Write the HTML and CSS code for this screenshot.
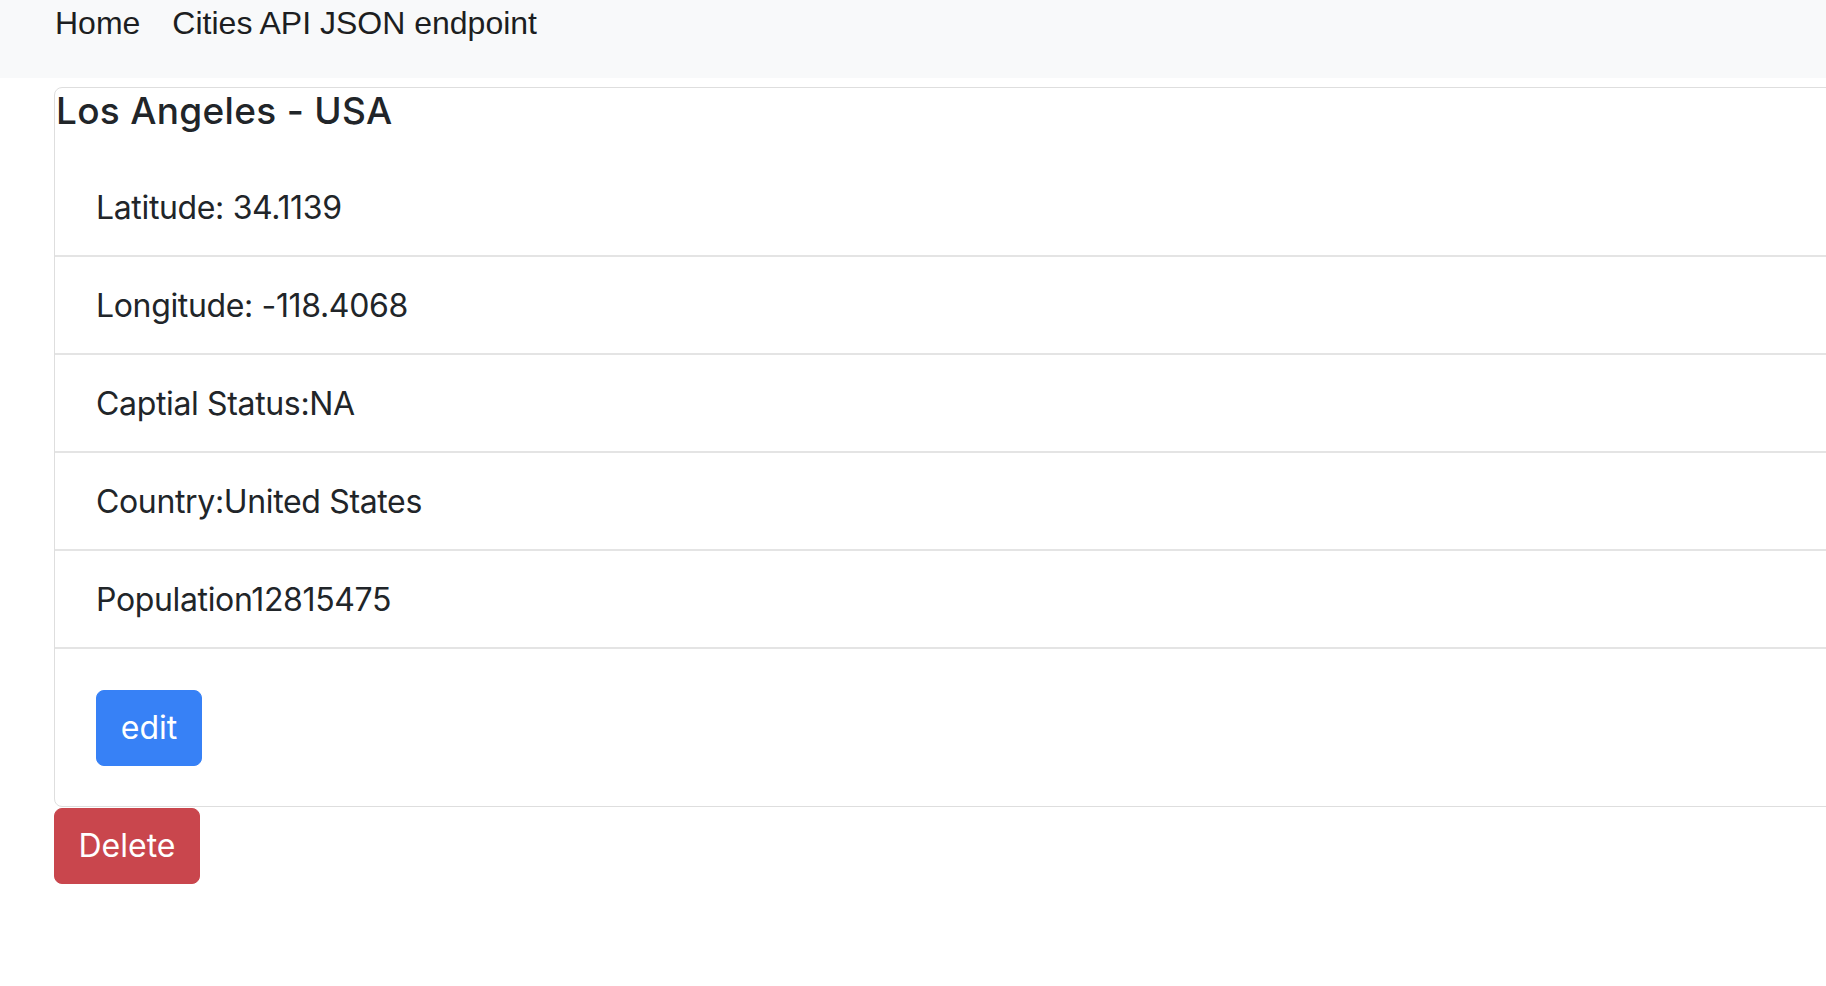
FILE: index.html
```html
<!DOCTYPE html>
<html lang="en">
<head>
<meta charset="utf-8">
<title>Los Angeles - USA</title>
<link rel="stylesheet" href="styles.css">
</head>
<body>
<nav class="navbar">
  <a class="nav-link" href="#">Home</a>
  <a class="nav-link" href="#">Cities API JSON endpoint</a>
</nav>
<main class="container">
  <div class="card">
    <h4 class="card-title">Los Angeles - USA</h4>
    <ul class="list-group">
      <li class="list-item">Latitude: 34.1139</li>
      <li class="list-item">Longitude: -118.4068</li>
      <li class="list-item">Captial Status:NA</li>
      <li class="list-item">Country:United States</li>
      <li class="list-item">Population12815475</li>
    </ul>
    <div class="card-body">
      <button class="btn btn-primary" type="button">edit</button>
    </div>
  </div>
  <button class="btn btn-danger" type="button">Delete</button>
</main>
</body>
</html>
```

FILE: styles.css
```css
html, body {
  margin: 0;
  padding: 0;
}
body {
  background: #ffffff;
  color: #212529;
  font-family: Inter, "Noto Sans", sans-serif;
  overflow: hidden;
}
.navbar {
  display: flex;
  gap: 32px;
  height: 78px;
  padding: 0 0 0 55px;
  background: #f8f9fa;
  box-sizing: border-box;
}
.nav-link {
  font-family: "Liberation Sans", Arial, sans-serif;
  font-size: 32px;
  line-height: 46px;
  color: #1c1e21;
  text-decoration: none;
}
.container {
  padding: 9px 0 0 54px;
}
.card {
  width: 1900px;
  border: 1px solid #dedede;
  border-radius: 8px;
  box-sizing: border-box;
}
.card-title {
  margin: 2px 0 27px 1px;
  font-size: 37px;
  font-weight: 500;
  line-height: 42px;
  letter-spacing: 0.3px;
}
.list-group {
  list-style: none;
  margin: 0;
  padding: 0;
}
.list-item {
  padding: 24px 41px 23px;
  font-size: 32px;
  line-height: 49px;
  border-bottom: 2px solid #e4e4e4;
  letter-spacing: -0.35px;
}
.card-body {
  padding: 41px 41px 40px;
}
.btn {
  display: inline-block;
  font-family: Inter, "Noto Sans", sans-serif;
  font-size: 32px;
  line-height: 48px;
  height: 76px;
  padding: 0;
  border: 1px solid transparent;
  border-radius: 8px;
  color: #ffffff;
  cursor: pointer;
  box-sizing: border-box;
}
.btn-primary {
  width: 106px;
  background: #3781f6;
  border-color: #3781f6;
}
.btn-danger {
  display: block;
  margin-top: 1px;
  width: 146px;
  background: #c9464d;
  border-color: #c9464d;
}
```
